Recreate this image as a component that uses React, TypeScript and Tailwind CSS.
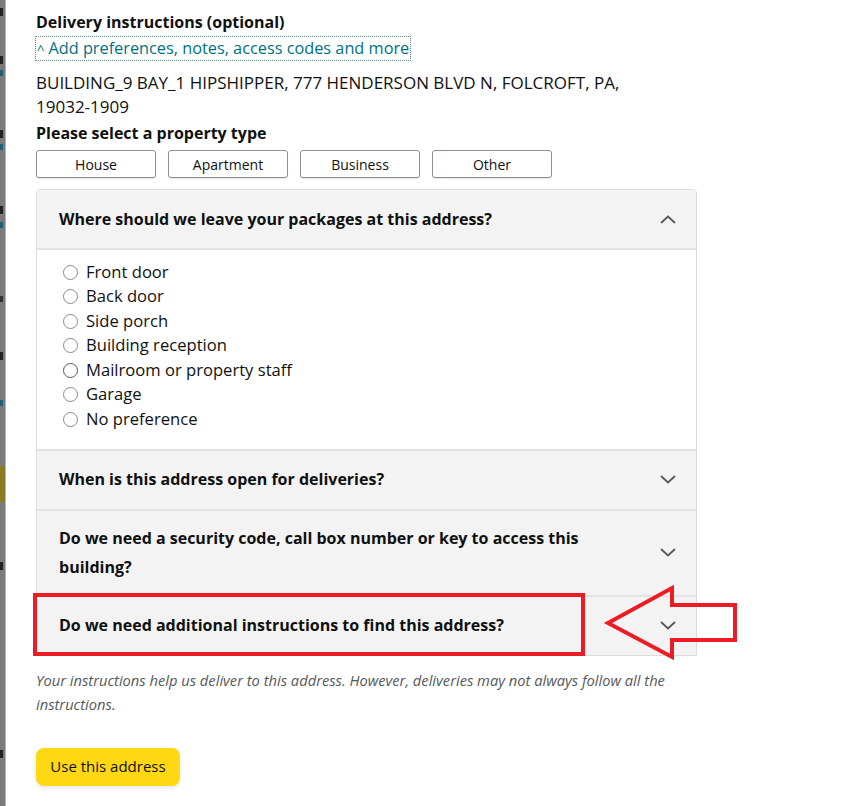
import { useState } from "react";

const places = [
    "Front door",
    "Back door",
    "Side porch",
    "Building reception",
    "Mailroom or property staff",
    "Garage",
    "No preference",
];

const propertyTypes = ["House", "Apartment", "Business", "Other"];

function Chevron({ up }: { up?: boolean }) {
    return (
        <svg width="16" height="9" viewBox="0 0 16 9" className="shrink-0">
            <polyline
                points={up ? "1,8 8,1.5 15,8" : "1,1 8,7.5 15,1"}
                fill="none"
                stroke="#565959"
                strokeWidth="1.8"
            />
        </svg>
    );
}

function Section({ title, up }: { title: string; up?: boolean }) {
    return (
        <div className="flex min-h-[58px] items-center justify-between gap-6 bg-[#f3f3f3] py-[13px] pl-[22px] pr-[20px]">
            <span className="text-[16px] font-bold leading-[29px] text-[#0f1111]">{title}</span>
            <Chevron up={up} />
        </div>
    );
}

export default function App() {
    const [place, setPlace] = useState<string | null>(null);

    return (
        <div
            className="relative flex h-[806px] w-[864px] overflow-hidden bg-white text-[#0f1111]"
            style={{ fontFamily: "'Open Sans', 'Liberation Sans', sans-serif" }}
        >
            {/* dimmed page behind the modal */}
            <div className="flex w-[6px] shrink-0 flex-col border-r border-[#b5b5b5] bg-[#7b7b7b]">
                <div className="mt-[8px] h-[8px] w-[3px] bg-[#222]" />
                <div className="mt-[40px] h-[8px] w-[3px] bg-[#222]" />
                <div className="mt-[6px] h-[6px] w-[3px] bg-[#1d5f73]" />
                <div className="mt-[54px] h-[8px] w-[3px] bg-[#222]" />
                <div className="mt-[6px] h-[6px] w-[3px] bg-[#1d5f73]" />
                <div className="mt-[56px] h-[8px] w-[3px] bg-[#222]" />
                <div className="mt-[8px] h-[6px] w-[3px] bg-[#1d5f73]" />
                <div className="mt-[68px] h-[6px] w-[3px] bg-[#333]" />
                <div className="mt-[50px] h-[8px] w-[3px] bg-[#222]" />
                <div className="mt-[40px] h-[6px] w-[3px] bg-[#1d5f73]" />
                <div className="mt-[60px] h-[36px] w-full bg-[#8a7b28]" />
                <div className="mt-[60px] h-[8px] w-[3px] bg-[#222]" />
                <div className="mt-[180px] h-[8px] w-[3px] bg-[#222]" />
            </div>

            <div className="flex w-[691px] flex-col pl-[30px]">
                <h2 className="mt-[10px] text-[16px] font-bold leading-[24px]">Delivery instructions (optional)</h2>
                <a
                    href="#"
                    className="mt-[3px] w-fit px-px text-[16.3px] leading-[22px] text-[#007185] outline-1 outline-dotted outline-[#5a8a94]"
                >
                    <span className="mr-[4px] text-[13px]">^</span>Add preferences, notes, access codes and more
                </a>
                <p className="mt-[11px] text-[17px] leading-[24px]">
                    BUILDING_9 BAY_1 HIPSHIPPER, 777 HENDERSON BLVD N, FOLCROFT, PA,{" "}
                    <span className="whitespace-nowrap">19032-1909</span>
                </p>
                <p className="mt-[2px] text-[16px] font-bold leading-[24px]">Please select a property type</p>

                <div className="mt-[5px] flex gap-[12px]">
                    {propertyTypes.map((t) => (
                        <button
                            key={t}
                            className="h-[28px] w-[120px] rounded-[3px] border border-[#8d9096] bg-white text-[14px] shadow-[0_1px_1px_rgba(0,0,0,0.1)]"
                        >
                            {t}
                        </button>
                    ))}
                </div>

                <div className="mt-[11px] overflow-hidden rounded-t-[4px] border border-[#dddddd]">
                    <Section title="Where should we leave your packages at this address?" up />
                    <div className="flex flex-col border-t-2 border-[#e3e3e3] pb-[17px] pl-[26px] pt-[10px]">
                        {places.map((p) => (
                            <label key={p} className="flex h-[24.5px] cursor-pointer items-center gap-[8px] text-[16.6px]">
                                <span
                                    onClick={() => setPlace(p)}
                                    className={
                                        p === "Mailroom or property staff"
                                            ? "h-[15px] w-[15px] rounded-full border-[1.5px] border-[#555]"
                                            : place === p
                                              ? "h-[15px] w-[15px] rounded-full border-[4px] border-[#007185]"
                                              : "h-[15px] w-[15px] rounded-full border-[1.5px] border-[#8a8a8a]"
                                    }
                                />
                                {p}
                            </label>
                        ))}
                    </div>
                    <div className="border-t-2 border-[#e3e3e3]">
                        <Section title="When is this address open for deliveries?" />
                    </div>
                    <div className="border-t-2 border-[#e3e3e3]">
                        <Section title="Do we need a security code, call box number or key to access this building?" />
                    </div>
                    <div className="border-t-2 border-[#e3e3e3]">
                        <Section title="Do we need additional instructions to find this address?" />
                    </div>
                </div>

                <p className="mt-[12px] text-[14.7px] italic leading-[24px] text-[#565959]">
                    Your instructions help us deliver to this address. However, deliveries may not always follow all the
                    instructions.
                </p>

                <button className="mt-[32px] h-[38px] w-[144px] rounded-[8px] bg-[#ffd814] text-[15px] shadow-[0_2px_5px_rgba(213,217,217,0.6)]">
                    Use this address
                </button>
            </div>

            {/* annotation */}
            <div className="absolute left-[33px] top-[593px] h-[63px] w-[552px] border-4 border-[#ec1c24]" />
            <svg className="absolute left-[600px] top-[580px]" width="145" height="85" viewBox="0 0 145 85">
                <polygon
                    points="8,43 72,8 72,25 135,25 135,60 72,60 72,77"
                    fill="none"
                    stroke="#ec1c24"
                    strokeWidth="4"
                />
            </svg>
        </div>
    );
}
